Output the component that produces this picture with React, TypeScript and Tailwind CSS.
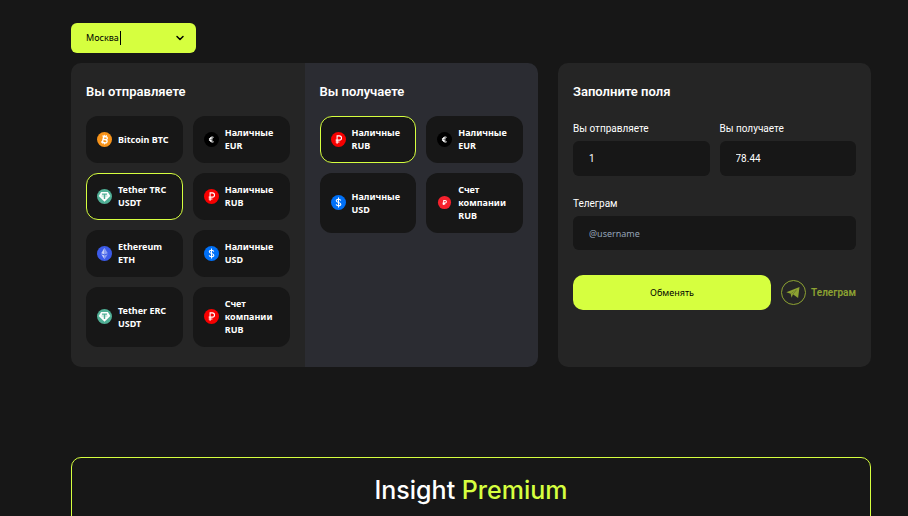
import { useState } from "react";
import clsx from "clsx";
import { ChevronDown } from "lucide-react";

type IconName = "btc" | "eur" | "usdt" | "rub" | "eth" | "usd" | "account";

interface Currency {
  id: string;
  label: string;
  icon: IconName;
}

const sendCurrencies: Currency[] = [
  { id: "btc", label: "Bitcoin BTC", icon: "btc" },
  { id: "cash-eur", label: "Наличные EUR", icon: "eur" },
  { id: "usdt-trc", label: "Tether TRC USDT", icon: "usdt" },
  { id: "cash-rub", label: "Наличные RUB", icon: "rub" },
  { id: "eth", label: "Ethereum ETH", icon: "eth" },
  { id: "cash-usd", label: "Наличные USD", icon: "usd" },
  { id: "usdt-erc", label: "Tether ERC USDT", icon: "usdt" },
  { id: "account-rub", label: "Счет компании RUB", icon: "rub" },
];

const receiveCurrencies: Currency[] = [
  { id: "cash-rub", label: "Наличные RUB", icon: "rub" },
  { id: "cash-eur", label: "Наличные EUR", icon: "eur" },
  { id: "cash-usd", label: "Наличные USD", icon: "usd" },
  { id: "account-rub", label: "Счет компании RUB", icon: "account" },
];

function CurrencyIcon({ name }: { name: IconName }) {
  return (
    <svg viewBox="0 0 32 32" className="size-[15px] shrink-0" fill="none" aria-hidden="true">
      {name === "btc" && (
        <>
          <circle cx="16" cy="16" r="16" fill="#f7931a" />
          <g stroke="#fff" strokeWidth="3" transform="rotate(13 16 16)">
            <path d="M10 9.5h8a3.2 3.2 0 0 1 0 6.4h-5M13 15.9h6a3.4 3.4 0 0 1 0 6.8h-9M13 9.5v13.2" />
            <path d="M14.5 6v3.5M18 6v3.5M14.5 22.7V26M18 22.7V26" strokeWidth="2" />
          </g>
        </>
      )}
      {name === "eur" && (
        <>
          <circle cx="16" cy="16" r="16" fill="#000" />
          <path d="M20.5 11.6a5.2 5.2 0 1 0 0 8.8M10.5 14.4h8M10.5 17.6h7.5" stroke="#fff" strokeWidth="2.2" />
        </>
      )}
      {name === "usdt" && (
        <>
          <circle cx="16" cy="16" r="16" fill="#50af95" />
          <path d="M9 6.5h14l5.5 8.5L16 27 3.5 15z" fill="#fff" />
          <path d="M10.5 9.5h11v3h-4v9h-3v-9h-4z" fill="#50af95" />
          <ellipse cx="16" cy="15" rx="6.5" ry="1.5" stroke="#50af95" strokeWidth="0.6" />
        </>
      )}
      {name === "rub" && (
        <>
          <circle cx="16" cy="16" r="16" fill="#f70000" />
          <path d="M13 25V8.2h4.8a4.6 4.6 0 0 1 0 9.2H10M10 21.3h8" stroke="#fff" strokeWidth="2.3" />
        </>
      )}
      {name === "eth" && (
        <>
          <circle cx="16" cy="16" r="16" fill="#3c5be8" />
          <path d="M16 3.5v14.8l-7-2.9z" fill="#c5cff8" />
          <path d="M16 3.5l7 11.9-7 2.9z" fill="#8da0f2" />
          <path d="M16 20.5v8l-7-10.8z" fill="#c5cff8" />
          <path d="M16 20.5v8l7-10.8z" fill="#8da0f2" />
        </>
      )}
      {name === "usd" && (
        <>
          <circle cx="16" cy="16" r="16" fill="#0070f7" />
          <path
            d="M20.8 12c-.4-2-2.2-3-4.8-3s-4.7 1.2-4.7 3.4c0 4.8 9.6 2.4 9.6 7.2 0 2.2-2.1 3.4-4.9 3.4s-4.7-1.1-5-3.2M16 5.5v21"
            stroke="#fff"
            strokeWidth="2.3"
          />
        </>
      )}
      {name === "account" && (
        <>
          <circle cx="16" cy="16" r="14" fill="#f5212d" />
          <path d="M14.3 21.5V11.5h3a2.8 2.8 0 0 1 0 5.6H12M12 19.3h5.5" stroke="#fff" strokeWidth="2.2" />
        </>
      )}
    </svg>
  );
}

interface CurrencyPanelProps {
  title: string;
  items: Currency[];
  selected: string;
  onSelect: (id: string) => void;
  className: string;
}

function CurrencyPanel({ title, items, selected, onSelect, className }: CurrencyPanelProps) {
  return (
    <section className={clsx("px-[15px] pt-[19px] pb-5", className)}>
      <h2 className="mb-3.5 font-['Roboto',sans-serif] text-[13px] leading-5 font-semibold">{title}</h2>
      <div className="grid grid-cols-2 gap-2.5">
        {items.map((item) => (
          <button
            key={item.id}
            type="button"
            aria-pressed={item.id === selected}
            onClick={() => onSelect(item.id)}
            className={clsx(
              "flex items-center gap-1.5 rounded-xl border bg-[#171717] px-2.5 pt-[9px] pb-2.5 text-left text-[9px] leading-[13px] font-bold",
              item.id === selected ? "border-[#d6ff3f]" : "border-transparent"
            )}
          >
            <CurrencyIcon name={item.icon} />
            <span>{item.label}</span>
          </button>
        ))}
      </div>
    </section>
  );
}

export default function App() {
  const [city, setCity] = useState("moscow");
  const [send, setSend] = useState("usdt-trc");
  const [receive, setReceive] = useState("cash-rub");

  return (
    <div className="h-screen overflow-hidden bg-[#171717] pt-[23px] pr-[37px] pl-[71px] font-['Noto_Sans',sans-serif] text-white">
      <div className="relative w-[125px] text-black">
        <select
          aria-label="Город"
          value={city}
          onChange={(e) => setCity(e.target.value)}
          className="block h-[30px] w-full appearance-none rounded-md bg-[#d6ff3f] px-[15px] text-[9px] outline-none"
        >
          <option value="moscow">Москва</option>
        </select>
        <span className="pointer-events-none absolute top-2 left-[49px] h-3.5 w-px bg-black" />
        <ChevronDown className="pointer-events-none absolute top-[9px] right-2.5 size-3" strokeWidth={3} />
      </div>

      <main className="mt-2.5 grid grid-cols-[467fr_313fr] gap-5">
        <div className="grid grid-cols-2 overflow-hidden rounded-[10px]">
          <CurrencyPanel
            title="Вы отправляете"
            items={sendCurrencies}
            selected={send}
            onSelect={setSend}
            className="bg-[#252525]"
          />
          <CurrencyPanel
            title="Вы получаете"
            items={receiveCurrencies}
            selected={receive}
            onSelect={setReceive}
            className="bg-[#2b2c32]"
          />
        </div>

        <form
          onSubmit={(e) => e.preventDefault()}
          className="rounded-[10px] bg-[#252525] px-[15px] pt-[19px]"
        >
          <h2 className="font-['Roboto',sans-serif] text-[13px] leading-5 font-semibold">Заполните поля</h2>

          <div className="mt-[19px] grid grid-cols-2 gap-2.5">
            <div>
              <label htmlFor="send" className="block font-['Roboto',sans-serif] text-[10px] leading-[15px]">
                Вы отправляете
              </label>
              <input
                id="send"
                defaultValue="1"
                className="mt-[5px] block h-[35px] w-full rounded-md bg-[#171717] px-4 font-['Roboto',sans-serif] text-[10px] outline-none"
              />
            </div>
            <div>
              <label htmlFor="receive" className="block font-['Roboto',sans-serif] text-[10px] leading-[15px]">
                Вы получаете
              </label>
              <input
                id="receive"
                defaultValue="78.44"
                className="mt-[5px] block h-[35px] w-full rounded-md bg-[#171717] px-4 font-['Roboto',sans-serif] text-[10px] outline-none"
              />
            </div>
          </div>

          <label htmlFor="telegram" className="mt-5 block font-['Roboto',sans-serif] text-[10px] leading-[15px]">
            Телеграм
          </label>
          <input
            id="telegram"
            placeholder="@username"
            className="mt-[5px] block h-[34px] w-full rounded-md bg-[#171717] px-4 text-[9px] outline-none placeholder:text-[#94a3b8]"
          />

          <div className="mt-[25px] flex items-center gap-2.5">
            <button type="submit" className="h-[35px] flex-1 rounded-[10px] bg-[#d6ff3f] text-[9px] text-black">
              Обменять
            </button>
            <a href="#telegram" className="flex items-center gap-[5px] text-[#8da232]">
              <svg viewBox="0 0 25 25" className="size-[25px]" fill="none" aria-hidden="true">
                <circle cx="12.5" cy="12.5" r="12" stroke="currentColor" />
                <path d="M5.3 12.2 18.5 7.1 17.1 18 11.9 14.3 16 9.6 9.6 13.7Z" fill="currentColor" />
                <path d="m9.6 13.7 6.4-4.1-4.1 4.7-1.2 3.5z" fill="currentColor" />
              </svg>
              <span className="font-['Roboto',sans-serif] text-[10px] font-semibold">Телеграм</span>
            </a>
          </div>
        </form>
      </main>

      <section className="mt-[90px] h-40 rounded-[10px] border border-[#d6ff3f] pt-4 text-center">
        <h2 className="font-['Inter',sans-serif] text-[25px] leading-8 font-medium">
          Insight <span className="text-[#d6ff3f]">Premium</span>
        </h2>
      </section>
    </div>
  );
}
